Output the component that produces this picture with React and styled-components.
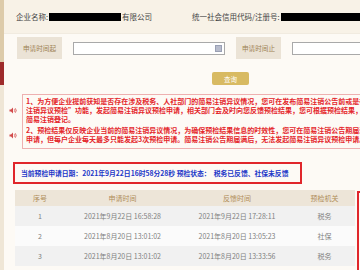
import React from 'react';
import styled, { createGlobalStyle } from 'styled-components';

const GlobalStyle = createGlobalStyle`
  body {
    margin: 0;
    background: #fdfaf5;
    font-family: "Noto Sans CJK SC", "Noto Sans", sans-serif;
  }
`

const notices = [
  [
    '1、为方便企业提前获知是否存在涉及税务、人社部门的简易注销异议情况，您可在发布简易注销公告前或是在简易注销公告期间通过“简易',
    '注销异议预检”功能，发起简易注销异议预检申请，相关部门会及时向您反馈预检结果，您可根据预检结果，采取相应措施后再申请',
    '简易注销登记。',
  ],
  [
    '2、预检结果仅反映企业当前的简易注销异议情况，为确保预检结果信息的时效性，您可在简易注销公告期届满前再次发起预检',
    '申请，但每户企业每天最多只能发起3次预检申请。简易注销公告期届满后，无法发起简易注销异议预检申请。',
  ],
];

const rows = [
  ['1', '2021年9月22日 16:58:28', '2021年9月22日 17:28:11', '税务'],
  ['2', '2021年8月20日 13:01:02', '2021年8月20日 13:05:23', '社保'],
  ['3', '2021年8月20日 13:01:02', '2021年8月20日 13:33:56', '税务'],
];

const cols = [50, 115, 114, 61];

const Speaker = () => (
  <svg width="8" height="7" viewBox="0 0 16 14">
    <path d="M1 5h3l4-4v12l-4-4H1z" fill="#d24a4a" />
    <path d="M10.5 4.5q2 2.5 0 5M12.5 2.5q4 4.5 0 9" fill="none" stroke="#d24a4a" strokeWidth="1.6" />
  </svg>
);

const App = () => {
  return (
    <>
      <GlobalStyle />
      <Page>
        <Sidebar>
          <SideBlock h={62} color="#ddcbaa" />
          <SideBlock h={23} color="#9e2b2b" />
          <SideBlock grow color="#efe6d6" />
        </Sidebar>
        <Main>
          <InfoRow>
            <InfoField w={176}>
              企业名称:<Redact w={72} />有限公司
            </InfoField>
            <InfoField>
              统一社会信用代码/注册号:<Redact w={90} />
            </InfoField>
          </InfoRow>
          <FilterRow>
            <FieldLabel>申请时间起</FieldLabel>
            <DateInput w={148}>
              <CalIcon />
            </DateInput>
            <FieldLabel>申请时间止</FieldLabel>
            <DateInput w={90} />
          </FilterRow>
          <ButtonRow>
            <QueryButton>查询</QueryButton>
          </ButtonRow>
          <NoticeRow>
            <IconColumn>
              <IconSlot h={28}><Speaker /></IconSlot>
              <IconSlot h={20}><Speaker /></IconSlot>
            </IconColumn>
            <NoticeBox>
              {notices.map((para, i) => (
                <NoticePara key={i}>
                  {para.map((line, j) => (
                    <NoticeLine key={j}>{line}</NoticeLine>
                  ))}
                </NoticePara>
              ))}
            </NoticeBox>
          </NoticeRow>
          <StatusBox>
            当前预检申请日期：2021年9月22日16时58分28秒 预检状态：&nbsp;&nbsp;税务已反馈、社保未反馈
          </StatusBox>
          <TableRow>
            <Table>
              <HeadRow>
                {['序号', '申请时间', '反馈时间', '预检机关'].map((h, i) => (
                  <HeadCell key={h} w={cols[i]}>{h}</HeadCell>
                ))}
              </HeadRow>
              {rows.map((r, i) => (
                <BodyRow key={r[0]} striped={i % 2 === 0}>
                  {r.map((c, j) => (
                    <BodyCell key={j} w={cols[j]}>{c}</BodyCell>
                  ))}
                </BodyRow>
              ))}
            </Table>
            <RedEdge />
          </TableRow>
        </Main>
      </Page>
    </>
  );
}

export default App;

const Page = styled.div`
  display: flex;
  width: 360px;
  height: 270px;
  overflow: hidden;
`
const Sidebar = styled.div`
  width: 4px;
  display: flex;
  flex-direction: column;
  flex-shrink: 0;
`
const SideBlock = styled.div`
  height: ${p => (p.h ? p.h + 'px' : 'auto')};
  flex: ${p => (p.grow ? 1 : 'none')};
  background: ${p => p.color};
`
const Main = styled.div`
  flex: 1;
  min-width: 0;
  overflow: hidden;
  background: #fdfaf5;
`
const InfoRow = styled.div`
  height: 33px;
  display: flex;
  align-items: center;
  padding-left: 12px;
  background: #f8f2e7;
  border-bottom: 1px solid #f1ebe0;
  font-size: 7.5px;
  color: #444;
  white-space: nowrap;
`
const InfoField = styled.div`
  display: flex;
  align-items: center;
  width: ${p => (p.w ? p.w + 'px' : 'auto')};
  flex-shrink: 0;
`
const Redact = styled.span`
  display: inline-block;
  width: ${p => p.w}px;
  height: 8px;
  background: #000;
  margin: 0 1px;
`
const FilterRow = styled.div`
  display: flex;
  align-items: center;
  padding: 3px 0 0 13px;
  white-space: nowrap;
`
const FieldLabel = styled.div`
  width: 45px;
  height: 22px;
  flex-shrink: 0;
  display: flex;
  align-items: center;
  justify-content: center;
  background: #ebe3d6;
  color: #9c8152;
  font-size: 6.6px;
  margin-right: 11px;
`
const DateInput = styled.div`
  width: ${p => p.w}px;
  height: 11px;
  flex-shrink: 0;
  border: 1px solid #a9a9a9;
  background: #fff;
  display: flex;
  align-items: center;
  justify-content: flex-end;
  padding-right: 2px;
  margin-right: 11px;
`
const CalIcon = styled.span`
  width: 5px;
  height: 5px;
  background: #b8bccc;
  border: 1px solid #9aa0b4;
`
const ButtonRow = styled.div`
  padding: 13px 0 0 208px;
`
const QueryButton = styled.div`
  width: 37px;
  height: 13px;
  border-radius: 2px;
  background: #d8ba62;
  color: #fff;
  font-size: 6.5px;
  display: flex;
  align-items: center;
  justify-content: center;
`
const NoticeRow = styled.div`
  display: flex;
  margin-top: 9px;
`
const IconColumn = styled.div`
  width: 18px;
  flex-shrink: 0;
  padding-top: 2px;
  display: flex;
  flex-direction: column;
`
const IconSlot = styled.div`
  height: ${p => p.h}px;
  display: flex;
  align-items: center;
  justify-content: center;
  margin-bottom: 1px;
`
const NoticeBox = styled.div`
  flex: 1;
  min-width: 0;
  border: 1px solid #eeb0b0;
  border-right: none;
  padding: 2px 0 3px 3px;
  color: #e4262b;
  font-size: 7px;
  font-weight: bold;
  line-height: 9.2px;
`
const NoticePara = styled.div`
  & + & {
    margin-top: 1.5px;
  }
`
const NoticeLine = styled.div`
  white-space: nowrap;
  overflow: hidden;
`
const StatusBox = styled.div`
  margin: 13px 0 0 9px;
  width: 289px;
  height: 22px;
  box-sizing: border-box;
  border: 2px solid #e0262b;
  display: flex;
  align-items: center;
  padding-left: 6px;
  color: #2236c8;
  font-size: 6.8px;
  font-weight: bold;
  white-space: nowrap;
`
const TableRow = styled.div`
  display: flex;
  margin: 6px 0 0 11px;
`
const Table = styled.div`
  width: 340px;
  flex-shrink: 0;
  font-size: 7px;
`
const HeadRow = styled.div`
  display: flex;
  height: 16px;
  background: #ede5d8;
  color: #b08d58;
`
const BodyRow = styled.div`
  display: flex;
  height: 20px;
  background: ${p => (p.striped ? '#f1f1f1' : '#fbfbfb')};
  color: #808080;
`
const HeadCell = styled.div`
  width: ${p => p.w}px;
  display: flex;
  align-items: center;
  justify-content: center;
`
const BodyCell = styled(HeadCell)``
const RedEdge = styled.div`
  flex: 1;
  margin: 1px 0 0 2px;
  height: 90px;
  border-left: 2px solid #e0262b;
  border-top: 2px solid #e0262b;
`
